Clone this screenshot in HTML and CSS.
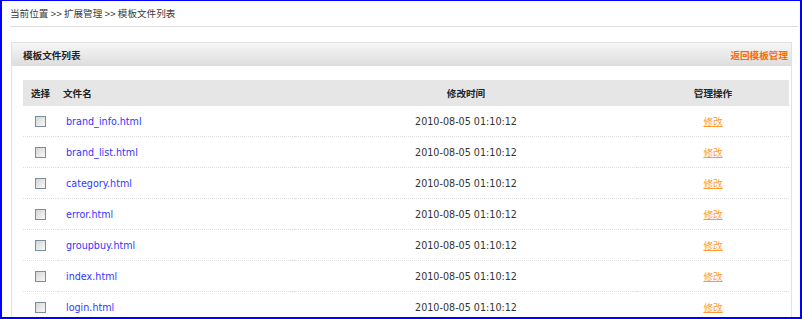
FILE: index.html
```html
<!DOCTYPE html>
<html lang="zh-CN">
<head>
    <meta charset="UTF-8">
    <title>模板文件列表</title>
    <link rel="stylesheet" href="styles.css">
</head>
<body>
    <div class="frame">
        <div class="crumb">当前位置 <span class="sep">&gt;&gt;</span> 扩展管理 <span class="sep">&gt;&gt;</span> 模板文件列表</div>

        <div class="panel">
            <div class="panel-head">
                <h3>模板文件列表</h3>
                <a href="#" class="back">返回模板管理</a>
            </div>
            <div class="panel-body">
                <table class="list">
                    <colgroup>
                        <col class="w-check">
                        <col class="w-name">
                        <col class="w-time">
                        <col class="w-op">
                    </colgroup>
                    <thead>
                        <tr>
                            <th class="col-check">选择</th>
                            <th class="col-name">文件名</th>
                            <th class="col-time">修改时间</th>
                            <th class="col-op">管理操作</th>
                        </tr>
                    </thead>
                    <tbody>
                        <tr>
                            <td class="col-check"><input type="checkbox" class="chk"></td>
                            <td class="col-name"><a href="#">brand_info.html</a></td>
                            <td class="col-time">2010-08-05 01:10:12</td>
                            <td class="col-op"><a href="#" class="edit">修改</a></td>
                        </tr>
                        <tr>
                            <td class="col-check"><input type="checkbox" class="chk"></td>
                            <td class="col-name"><a href="#">brand_list.html</a></td>
                            <td class="col-time">2010-08-05 01:10:12</td>
                            <td class="col-op"><a href="#" class="edit">修改</a></td>
                        </tr>
                        <tr>
                            <td class="col-check"><input type="checkbox" class="chk"></td>
                            <td class="col-name"><a href="#">category.html</a></td>
                            <td class="col-time">2010-08-05 01:10:12</td>
                            <td class="col-op"><a href="#" class="edit">修改</a></td>
                        </tr>
                        <tr>
                            <td class="col-check"><input type="checkbox" class="chk"></td>
                            <td class="col-name"><a href="#">error.html</a></td>
                            <td class="col-time">2010-08-05 01:10:12</td>
                            <td class="col-op"><a href="#" class="edit">修改</a></td>
                        </tr>
                        <tr>
                            <td class="col-check"><input type="checkbox" class="chk"></td>
                            <td class="col-name"><a href="#">groupbuy.html</a></td>
                            <td class="col-time">2010-08-05 01:10:12</td>
                            <td class="col-op"><a href="#" class="edit">修改</a></td>
                        </tr>
                        <tr>
                            <td class="col-check"><input type="checkbox" class="chk"></td>
                            <td class="col-name"><a href="#">index.html</a></td>
                            <td class="col-time">2010-08-05 01:10:12</td>
                            <td class="col-op"><a href="#" class="edit">修改</a></td>
                        </tr>
                        <tr>
                            <td class="col-check"><input type="checkbox" class="chk"></td>
                            <td class="col-name"><a href="#">login.html</a></td>
                            <td class="col-time">2010-08-05 01:10:12</td>
                            <td class="col-op"><a href="#" class="edit">修改</a></td>
                        </tr>
                    </tbody>
                </table>
            </div>
        </div>
    </div>
</body>
</html>
```

FILE: styles.css
```css
html, body {
    margin: 0;
    padding: 0;
    background-color: #ffffff;
}

body {
    font-family: "DejaVu Sans", "Noto Sans CJK SC", sans-serif;
    font-size: 9.6px;
    color: #333333;
}

.frame {
    box-sizing: border-box;
    width: 802px;
    height: 319px;
    overflow: hidden;
    border-style: solid;
    border-color: #0000ff;
    border-width: 1px 2px 2px 2px;
}

.crumb {
    margin: 0 2px 0 8px;
    height: 25px;
    line-height: 25px;
    border-bottom: 1px solid #dddddd;
    font-family: "Noto Sans CJK SC", sans-serif;
    color: #3a3a3a;
}

.crumb .sep {
    font-family: "Liberation Sans", sans-serif;
}

.panel {
    margin: 15px 8px 0 9px;
    border: 1px solid #e2e2e2;
    border-bottom: none;
    height: 400px;
}

.panel-head {
    height: 23px;
    padding: 0 3px 0 11px;
    display: flex;
    align-items: center;
    justify-content: space-between;
    background: linear-gradient(#f6f6f6, #dddddd);
}

.panel-head h3 {
    margin: 0;
    font-size: 9.6px;
    font-weight: bold;
    color: #222222;
}

.back {
    color: #ff6a00;
    font-weight: bold;
    text-decoration: none;
}

.panel-body {
    padding: 14px 2px 0 11px;
}

.list {
    width: 766px;
    border-collapse: collapse;
    table-layout: fixed;
}

.w-check {
    width: 35px;
}

.w-name {
    width: 237px;
}

.w-time {
    width: 342px;
}

.w-op {
    width: 152px;
}

.list th {
    height: 26px;
    padding: 0;
    background-color: #e6e6e6;
    font-weight: bold;
    color: #222222;
}

.list td {
    height: 30px;
    padding: 0;
    border-bottom: 1px dotted #dddddd;
}

.col-check {
    text-align: center;
}

.col-name {
    text-align: left;
}

.list th.col-name {
    padding-left: 5px;
}

.list td.col-name {
    padding-left: 8px;
}

.col-time {
    text-align: center;
}

.col-op {
    text-align: center;
}

.col-name a {
    color: #3535ff;
    text-decoration: none;
}

.edit {
    color: #ff9933;
    text-decoration: underline;
}

.chk {
    appearance: none;
    -webkit-appearance: none;
    width: 11px;
    height: 11px;
    margin: 0;
    vertical-align: middle;
    border: 1px solid #7b8c9c;
    background: linear-gradient(135deg, #d6d6d6, #f8f8f8);
    box-sizing: border-box;
}
```
